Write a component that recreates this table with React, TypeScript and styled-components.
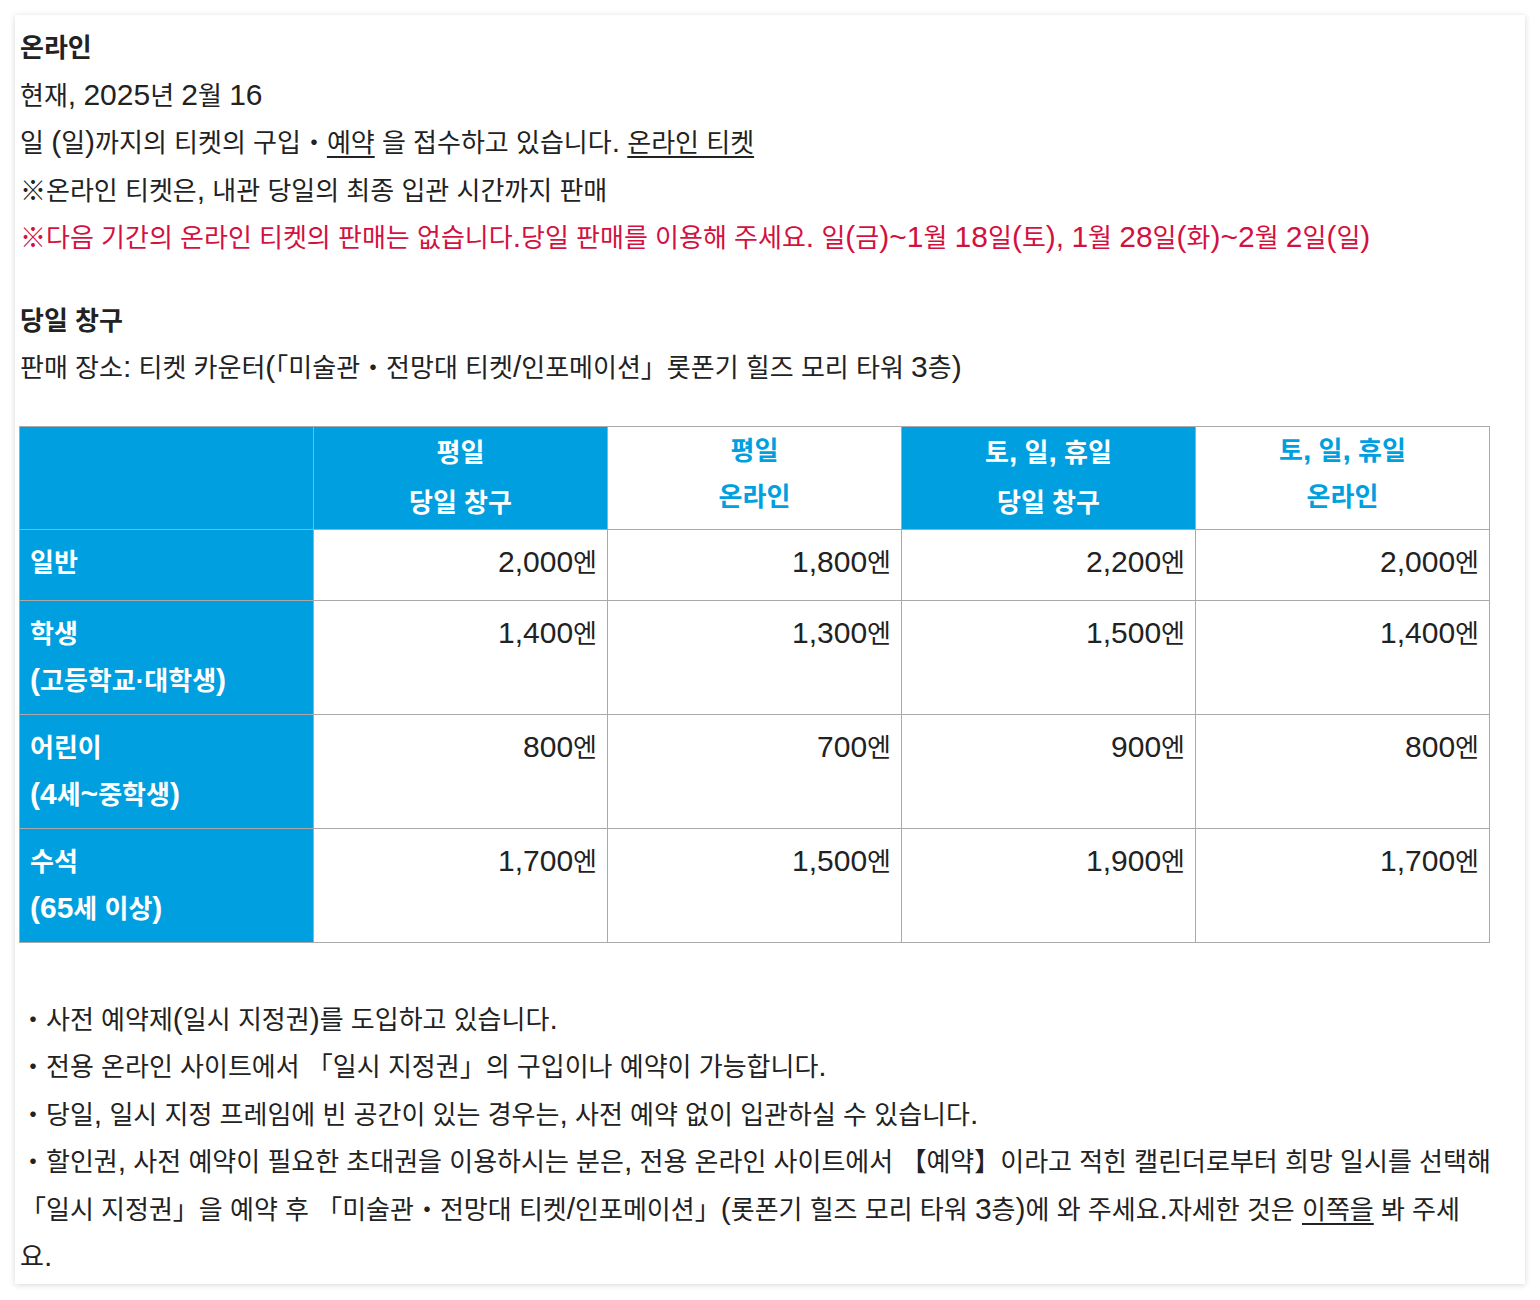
import React from 'react';
import styled, {createGlobalStyle} from 'styled-components';

const GlobalStyle = createGlobalStyle`
  body {
    margin: 0;
    background: #ffffff;
    font-family: "Liberation Sans", "Noto Sans CJK KR", sans-serif;
    color: #222222;
  }
`;

const Page = styled.div`
  padding: 15px;
`;

const Card = styled.section`
  background: #ffffff;
  box-shadow: 0 1px 6px rgba(0, 0, 0, 0.16);
  padding: 10px 5px 2px;
  font-size: 26px;
  line-height: 47.5px;
`;

// latin runs (digits, punctuation) are drawn larger, as in the original page
const Latin = styled.span`
  font-size: 30px;
  line-height: 0;
`;

const mix = (text: string) =>
  text.split(/([\x21-\x7E]+)/).map((part, i) => (i % 2 ? <Latin key={i}>{part}</Latin> : part));

const Heading = styled.div`
  font-weight: 700;
`;

const Line = styled.div<{ $tone?: 'alert' }>`
  color: ${p => (p.$tone === 'alert' ? '#d3113f' : '#222222')};
`;

const Section = styled.div`
  margin-top: 35px;
`;

const Link = styled.a`
  color: inherit;
  text-decoration: underline;
  text-underline-offset: 4px;
`;

const PriceTable = styled.table`
  margin: 33px 0 0 -1px;
  width: 1471px;
  border-collapse: collapse;
  table-layout: fixed;
  line-height: 47px;

  td, th {
    border: 1px solid #aaaaaa;
    vertical-align: top;
  }
`;

const ColHead = styled.th<{ $filled?: boolean }>`
  height: 100px;
  padding: ${p => (p.$filled ? '1px 0 0' : '1px 0 0')};
  font-weight: 700;
  text-align: center;
  background: ${p => (p.$filled ? '#009fdf' : '#ffffff')};
  color: ${p => (p.$filled ? '#ffffff' : '#009fdf')};
  line-height: ${p => (p.$filled ? '50.5px' : '46px')};
`;

const RowHead = styled.th`
  padding: 10px 10px 0;
  background: #009fdf;
  color: #ffffff;
  font-weight: 700;
  text-align: left;
`;

const Price = styled.td<{ $rows: number }>`
  height: ${p => (p.$rows === 1 ? '60px' : '103px')};
  padding: 10px 10px 0;
  text-align: right;
  color: #222222;
`;

const Notes = styled.div`
  margin-top: 54px;
`;

const Note = styled.div``;

const headers: {top: string; bottom: string; filled: boolean}[] = [
  {top: '평일', bottom: '당일 창구', filled: true},
  {top: '평일', bottom: '온라인', filled: false},
  {top: '토, 일, 휴일', bottom: '당일 창구', filled: true},
  {top: '토, 일, 휴일', bottom: '온라인', filled: false},
];

const rows: {label: string; sub?: string; prices: string[]}[] = [
  {label: '일반', prices: ['2,000엔', '1,800엔', '2,200엔', '2,000엔']},
  {label: '학생', sub: '(고등학교·대학생)', prices: ['1,400엔', '1,300엔', '1,500엔', '1,400엔']},
  {label: '어린이', sub: '(4세~중학생)', prices: ['800엔', '700엔', '900엔', '800엔']},
  {label: '수석', sub: '(65세 이상)', prices: ['1,700엔', '1,500엔', '1,900엔', '1,700엔']},
];

export default function App() {
  return (
    <Page>
      <GlobalStyle />
      <Card>
        <Heading>온라인</Heading>
        <Line>{mix('현재, 2025년 2월 16')}</Line>
        <Line>
          {mix('일 (일)까지의 티켓의 구입・')}<Link href="#">예약</Link> 을 접수하고 있습니다{mix('.')}{' '}
          <Link href="#">온라인 티켓</Link>
        </Line>
        <Line>{mix('※온라인 티켓은, 내관 당일의 최종 입관 시간까지 판매')}</Line>
        <Line $tone="alert">
          {mix('※다음 기간의 온라인 티켓의 판매는 없습니다.당일 판매를 이용해 주세요. 일(금)~1월 18일(토), 1월 28일(화)~2월 2일(일)')}
        </Line>

        <Section>
          <Heading>당일 창구</Heading>
          <Line>{mix('판매 장소: 티켓 카운터(「미술관・전망대 티켓/인포메이션」롯폰기 힐즈 모리 타워 3층)')}</Line>
        </Section>

        <PriceTable>
          <thead>
            <tr>
              <ColHead $filled />
              {headers.map((h, i) => (
                <ColHead key={i} $filled={h.filled}>
                  {mix(h.top)}
                  <br />
                  {h.bottom}
                </ColHead>
              ))}
            </tr>
          </thead>
          <tbody>
            {rows.map(r => (
              <tr key={r.label}>
                <RowHead>
                  {r.label}
                  {r.sub && (
                    <>
                      <br />
                      {mix(r.sub)}
                    </>
                  )}
                </RowHead>
                {r.prices.map((price, i) => (
                  <Price key={i} $rows={r.sub ? 2 : 1}>
                    {mix(price)}
                  </Price>
                ))}
              </tr>
            ))}
          </tbody>
        </PriceTable>

        <Notes>
          <Note>{mix('・사전 예약제(일시 지정권)를 도입하고 있습니다.')}</Note>
          <Note>{mix('・전용 온라인 사이트에서 「일시 지정권」의 구입이나 예약이 가능합니다.')}</Note>
          <Note>{mix('・당일, 일시 지정 프레임에 빈 공간이 있는 경우는, 사전 예약 없이 입관하실 수 있습니다.')}</Note>
          <Note>
            {mix('・할인권, 사전 예약이 필요한 초대권을 이용하시는 분은, 전용 온라인 사이트에서 【예약】이라고 적힌 캘린더로부터 희망 일시를 선택해')}
            <br />
            {mix('「일시 지정권」을 예약 후 「미술관・전망대 티켓/인포메이션」(롯폰기 힐즈 모리 타워 3층)에 와 주세요.자세한 것은 ')}
            <Link href="#">이쪽을</Link> 봐 주세
            <br />
            {mix('요.')}
          </Note>
        </Notes>
      </Card>
    </Page>
  );
}
